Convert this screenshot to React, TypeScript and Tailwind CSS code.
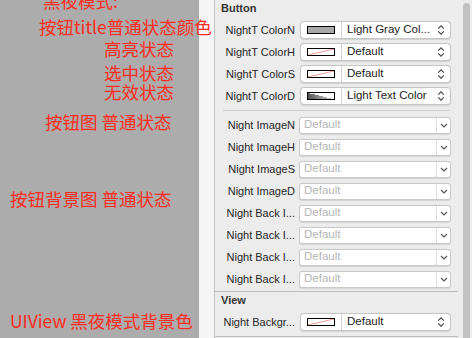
import React from "react";

const notes = [
  { text: "黑夜模式:", cls: "-mt-[8px] pl-[43px]" },
  { text: "按钮title普通状态颜色", cls: "mt-[8px] pl-[39px]" },
  { text: "高亮状态", cls: "mt-[4px] pl-[104px]" },
  { text: "选中状态", cls: "mt-[6px] pl-[104px]" },
  { text: "无效状态", cls: "mt-[1px] pl-[104px]" },
  { text: "按钮图 普通状态", cls: "mt-[12px] pl-[45px]" },
  { text: "按钮背景图 普通状态", cls: "mt-[59px] pl-[10px]" },
  { text: "UIView 黑夜模式背景色", cls: "mt-[104px] pl-[10px]" },
];

function UpDown() {
  return (
    <svg width="8" height="12" viewBox="0 0 8 12" fill="none" stroke="#4a4a4a" strokeWidth="1.2">
      <path d="M1.2 4.6 L4 1.8 L6.8 4.6" />
      <path d="M1.2 7.4 L4 10.2 L6.8 7.4" />
    </svg>
  );
}

function Down() {
  return (
    <svg width="8" height="5" viewBox="0 0 8 5" fill="none" stroke="#555" strokeWidth="1.2">
      <path d="M1 1 L4 4 L7 1" />
    </svg>
  );
}

type Swatch = "gray" | "none" | "light";

function SwatchBox({ kind }: { kind: Swatch }) {
  if (kind === "gray") {
    return <div className="h-[8px] w-[28px] border border-black bg-[#a9a9a9]" />;
  }
  if (kind === "light") {
    return (
      <div className="h-[8px] w-[28px] border border-black bg-[linear-gradient(to_top_right,transparent_50%,#ffffff_50%),linear-gradient(to_right,#555555,#d8d8d8)]" />
    );
  }
  return (
    <div className="relative h-[8px] w-[28px] border border-black bg-white">
      <svg className="absolute inset-0" width="26" height="6" viewBox="0 0 26 6">
        <line x1="0" y1="6" x2="26" y2="0" stroke="#f28080" strokeWidth="0.8" />
      </svg>
    </div>
  );
}

function ColorRow({ label, value, swatch }: { label: string; value: string; swatch: Swatch }) {
  return (
    <div className="flex h-[22px] items-center">
      <div className="w-[80px] text-right text-[11px] text-[#262626] whitespace-nowrap">{label}</div>
      <div className="ml-[5px] flex h-[18px] w-[151px] items-center rounded-[4px] border border-[#c6c6c6] bg-white shadow-[0_0.5px_1px_rgba(0,0,0,0.12)]">
        <div className="flex h-full w-[41px] items-center justify-center border-r border-[#d4d4d4]">
          <SwatchBox kind={swatch} />
        </div>
        <div className="flex-1 pl-[5px] text-[11.5px] text-[#1c1c1c] whitespace-nowrap">{value}</div>
        <div className="pr-[5px]">
          <UpDown />
        </div>
      </div>
    </div>
  );
}

function ImageRow({ label }: { label: string }) {
  return (
    <div className="flex h-[22px] items-center">
      <div className="w-[80px] text-right text-[11px] text-[#262626] whitespace-nowrap">{label}</div>
      <div className="ml-[4px] flex h-[17px] w-[152px] items-center rounded-[3px] border border-[#c9c9c9] bg-white shadow-[0_0.5px_1px_rgba(0,0,0,0.1)]">
        <div className="flex-1 pl-[4px] text-[11.5px] text-[#b5b5b5]">Default</div>
        <div className="flex h-full w-[14px] items-center justify-center border-l border-[#dedede]">
          <Down />
        </div>
      </div>
    </div>
  );
}

export default function App() {
  return (
    <div className="flex h-[338px] w-[472px] overflow-hidden bg-[#ececec] font-['Liberation_Sans',Arial,sans-serif]">
      <div className="relative z-10 w-[199px] shrink-0 bg-[#acacac] font-['Noto_Sans_CJK_SC',sans-serif] text-[17.5px] text-[#ff2b1c] whitespace-nowrap">
        {notes.map((n) => (
          <div key={n.text} className={`h-[18px] leading-[18px] ${n.cls}`}>
            {n.text}
          </div>
        ))}
      </div>
      <div className="w-[16px] shrink-0 border-r border-[#c4c4c4] bg-[#f5f5f5]" />
      <div className="w-[243px] shrink-0">
        <div className="h-[19px] pl-[6px] text-[11px] font-bold leading-[17px] text-[#333]">Button</div>
        <ColorRow label="NightT ColorN" value="Light Gray Col..." swatch="gray" />
        <ColorRow label="NightT ColorH" value="Default" swatch="none" />
        <ColorRow label="NightT ColorS" value="Default" swatch="none" />
        <ColorRow label="NightT ColorD" value="Light Text Color" swatch="light" />
        <div className="ml-[8px] mt-[3px] h-px w-[227px] bg-[#cdcdcd]" />
        <div className="pt-[3px]">
          <ImageRow label="Night ImageN" />
          <ImageRow label="Night ImageH" />
          <ImageRow label="Night ImageS" />
          <ImageRow label="Night ImageD" />
          <ImageRow label="Night Back I..." />
          <ImageRow label="Night Back I..." />
          <ImageRow label="Night Back I..." />
          <ImageRow label="Night Back I..." />
        </div>
        <div className="mt-[1px] h-px bg-[#bdbdbd]" />
        <div className="h-[19px] pl-[6px] text-[11px] font-bold leading-[17px] text-[#333]">View</div>
        <ColorRow label="Night Backgr..." value="Default" swatch="none" />
        <div className="mt-[3px] h-px bg-[#bdbdbd]" />
      </div>
      <div className="flex-1 pl-[5px] pt-[3px]">
        <div className="h-[400px] w-[7px] rounded-full bg-[#c2c2c2]" />
      </div>
    </div>
  );
}
